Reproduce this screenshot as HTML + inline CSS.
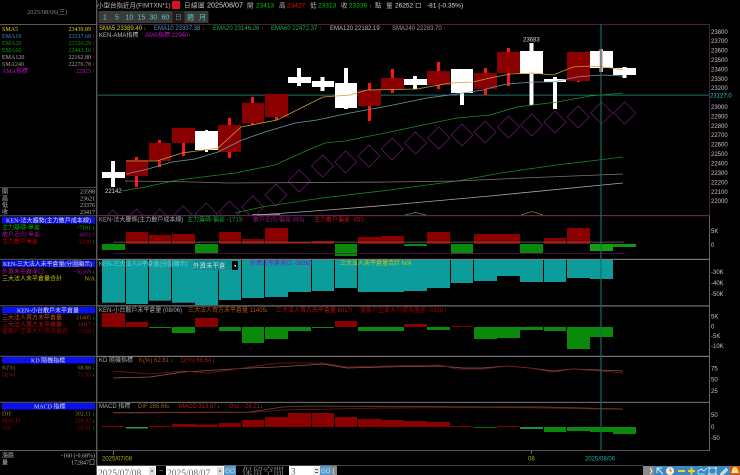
<!DOCTYPE html>
<html><head><meta charset="utf-8"><style>
html,body{margin:0;padding:0;background:#000;width:740px;height:475px;overflow:hidden}
svg{display:block;filter:blur(.3px)}
text{font-family:"Liberation Sans","Noto Sans CJK TC",sans-serif;font-size:6px;fill:#bbb}
.l text{font-family:"Liberation Serif","Noto Sans CJK TC",serif;font-size:6px}
.e{text-anchor:end}
.g{fill:#00c800}.r{fill:#e81010}
.a text{font-size:6px;fill:#c4c4c4}
</style></head><body>
<svg width="740" height="475" viewBox="0 0 740 475" xmlns="http://www.w3.org/2000/svg">
<defs><clipPath id="m"><rect x="98" y="25" width="611" height="190"/></clipPath><clipPath id="b"><rect x="0" y="460" width="740" height="15"/></clipPath></defs>
<rect width="740" height="475" fill="#000"/>

<!-- top bar -->
<text x="97" y="7.5" style="font-size:6.5px">小型台指近月(FIMTXN*1)</text>
<rect x="172" y="1" width="8" height="8" fill="#d8141c"/>
<text x="184" y="7.5" style="font-size:6.5px;letter-spacing:.5px">日線圖</text>
<text x="207" y="7.5" style="font-size:7.2px;fill:#ddd">2025/08/07</text>
<text x="247" y="7.5" style="font-size:6.5px">開</text><text x="256" y="7.5" class="g" style="font-size:6.5px">23413</text>
<text x="279" y="7.5" style="font-size:6.5px">高</text><text x="287" y="7.5" class="r" style="font-size:6.5px">23427</text>
<text x="310" y="7.5" style="font-size:6.5px">低</text><text x="318" y="7.5" class="g" style="font-size:6.5px">23313</text>
<text x="341" y="7.5" style="font-size:6.5px">收</text><text x="349" y="7.5" class="g" style="font-size:6.5px">23336</text><text x="369" y="7.5" class="g" style="font-size:6px">↓</text>
<text x="375" y="7.5" style="font-size:6.5px">點</text>
<text x="386" y="7.5" style="font-size:6.5px">量</text><text x="395" y="7.5" style="font-size:6.5px;fill:#ddd">26252</text><text x="415" y="7.5" style="font-size:6.5px">口</text>
<text x="427" y="7.5" style="font-size:6.5px;fill:#ddd">-81 (-0.35%)</text>

<!-- buttons -->
<rect x="98.5" y="11" width="110" height="12" fill="#3a3a3a"/>
<rect x="172.5" y="11" width="12" height="12" fill="#1c1c1c"/>
<g>
<text x="103" y="19.5" style="fill:#55cfc4;font-size:7px">1</text>
<text x="115" y="19.5" style="fill:#55cfc4;font-size:7px">5</text>
<text x="125.5" y="19.5" style="fill:#55cfc4;font-size:7px">10</text>
<text x="137.5" y="19.5" style="fill:#55cfc4;font-size:7px">15</text>
<text x="149.5" y="19.5" style="fill:#55cfc4;font-size:7px">30</text>
<text x="161.5" y="19.5" style="fill:#55cfc4;font-size:7px">60</text>
<text x="175" y="19.5" style="fill:#777;font-size:7px">日</text>
<text x="187" y="19.5" style="fill:#55cfc4;font-size:7px">週</text>
<text x="199" y="19.5" style="fill:#55cfc4;font-size:7px">月</text>
</g>

<!-- left column -->
<g class="l">
<text x="27" y="14" style="fill:#888;font-size:6.5px">2025/08/06(三)</text>
<text x="2" y="31" style="fill:#d8d800">SMA5</text><text x="91" y="31" class="e" style="fill:#d8d800">23439.89</text>
<text x="2" y="38" style="fill:#4488cc">EMA10</text><text x="91" y="38" class="e" style="fill:#4488cc">23337.68</text>
<text x="2" y="45" style="fill:#00a000">EMA20</text><text x="91" y="45" class="e" style="fill:#00a000">23120.29</text>
<text x="2" y="52" style="fill:#00a000">EMA60</text><text x="91" y="52" class="e" style="fill:#00a000">22443.10</text>
<text x="2" y="59" style="fill:#aaa">EMA120</text><text x="91" y="59" class="e" style="fill:#aaa">22162.80</text>
<text x="2" y="66" style="fill:#b09090">SMA240</text><text x="91" y="66" class="e" style="fill:#b09090">22276.78</text>
<text x="2" y="73" style="fill:#c010c0">AMA指標</text><text x="91" y="73" class="e" style="fill:#c010c0">22925</text>
<text x="92" y="31" class="r">↑</text><text x="92" y="38" class="r">↑</text><text x="92" y="45" class="r">↑</text><text x="92" y="52" class="r">↑</text><text x="92" y="59" class="r">↑</text><text x="92" y="66" class="r">↑</text><text x="92" y="73" class="r">↑</text>

<text x="2" y="193.5">開</text><text x="95" y="193.5" class="e">23598</text>
<text x="2" y="200.5">高</text><text x="95" y="200.5" class="e">23621</text>
<text x="2" y="207">低</text><text x="95" y="207" class="e">23376</text>
<text x="2" y="214">收</text><text x="95" y="214" class="e">23417</text>

<rect x="2" y="217" width="93" height="6.5" fill="#0a10ee"/>
<text x="6" y="222.5" textLength="85" lengthAdjust="spacing" style="fill:#ddd">KEN-法大趨勢(主力散戶成本線)</text>
<text x="2" y="229.5" style="fill:#00b000">主力基礎-單差</text><text x="91" y="229.5" class="e" style="fill:#00b000">-7181</text><text x="92" y="229.5" class="g">↓</text>
<text x="2" y="236.5" style="fill:#a01090">散戶走向-單差</text><text x="91" y="236.5" class="e" style="fill:#a01090">4851</text><text x="92" y="236.5" class="r">↑</text>
<text x="2" y="243.5" style="fill:#b00000">主力散戶單差</text><text x="91" y="243.5" class="e" style="fill:#b00000">-2330</text><text x="92" y="243.5" class="g">↓</text>

<rect x="2" y="260.5" width="93" height="6.5" fill="#0a10ee"/>
<text x="3" y="266" textLength="89" lengthAdjust="spacing" style="fill:#ddd">KEN-三大法人未平倉量(分圖顯示)</text>
<text x="2" y="273.5" style="fill:#b010a0">外資未平倉淨口</text><text x="91" y="273.5" class="e" style="fill:#b010a0">-36369</text><text x="92" y="273.5" class="g">↓</text>
<text x="2" y="280.5" style="fill:#c8c800">三大法人未平倉量合計</text><text x="95" y="280.5" class="e" style="fill:#c8c800">N/A</text>

<rect x="2" y="307" width="93" height="6.5" fill="#0a10ee"/>
<text x="17" y="312.5" textLength="62" lengthAdjust="spacing" style="fill:#ddd">KEN-小台散戶未平倉量</text>
<text x="2" y="319.5" style="fill:#c05010">三大法人買方未平倉量</text><text x="91" y="319.5" class="e" style="fill:#c05010">11405</text><text x="92" y="319.5" class="g">↓</text>
<text x="2" y="326.5" style="fill:#c01010">三大法人賣方未平倉量</text><text x="91" y="326.5" class="e" style="fill:#c01010">6017</text><text x="92" y="326.5" class="r">↑</text>
<text x="2" y="333" style="fill:#900000">盤散戶空單大戶照淘量差</text><text x="91" y="333" class="e" style="fill:#900000">-5388</text><text x="92" y="333" class="r">↑</text>

<rect x="2" y="357" width="93" height="6.5" fill="#0a10ee"/>
<text x="31" y="362.5" style="fill:#ddd">KD 隨機指標</text>
<text x="2" y="369.5" style="fill:#8a7a20">K(%)</text><text x="91" y="369.5" class="e" style="fill:#8a7a20">68.88</text><text x="92" y="369.5" class="g">↓</text>
<text x="2" y="376.5" style="fill:#a01010">D(%)</text><text x="91" y="376.5" class="e" style="fill:#a01010">71.55</text><text x="92" y="376.5" class="g">↓</text>

<rect x="2" y="403" width="93" height="6.5" fill="#0a10ee"/>
<text x="34" y="408.5" style="fill:#ddd">MACD 指標</text>
<text x="2" y="415.5" style="fill:#8a7a20">DIF</text><text x="91" y="415.5" class="e" style="fill:#8a7a20">302.11</text><text x="92" y="415.5" class="g">↓</text>
<text x="2" y="422.5" style="fill:#b00000">MACD</text><text x="91" y="422.5" class="e" style="fill:#b00000">320.92</text><text x="92" y="422.5" class="g">↓</text>
<text x="2" y="429.5" style="fill:#900000">Osc</text><text x="91" y="429.5" class="e" style="fill:#900000">-18.81</text><text x="92" y="429.5" class="g">↓</text>

<text x="2" y="457.5">漲跌</text><text x="95" y="457.5" class="e">-160 (-0.68%)</text>
<text x="2" y="464.5">量</text><text x="95" y="464.5" class="e">172847口</text>
</g>

<!-- separators -->
<g fill="#5a5a5a">
<rect x="0" y="24" width="97" height="1"/><rect x="0" y="187" width="97" height=".7"/><rect x="0" y="215.3" width="97" height="1"/>
<rect x="0" y="258.8" width="97" height="1"/><rect x="0" y="305.3" width="97" height="1"/><rect x="0" y="355.8" width="97" height="1"/><rect x="0" y="401.8" width="97" height="1"/><rect x="0" y="450" width="97" height="1"/>
<rect x="96" y="0" width="1.4" height="475"/>
<rect x="97" y="258.8" width="613" height="1.2" fill="#777"/><rect x="97" y="305.3" width="613" height="1.2" fill="#777"/><rect x="97" y="355.8" width="613" height="1.2" fill="#777"/><rect x="97" y="401.8" width="613" height="1.2" fill="#666"/><rect x="97" y="450" width="613" height="1" fill="#555"/>
<rect x="709" y="216" width="1" height="235" fill="#666"/>
<rect x="97" y="465" width="546" height="1" fill="#444"/>
</g>
<rect x="97" y="24" width="613" height="1" fill="#4a2040"/>
<rect x="97" y="215" width="613" height="1.2" fill="#5a2a50"/>
<rect x="709" y="24" width="1" height="192" fill="#4a2040"/>

<!-- diamonds -->
<g clip-path="url(#m)" fill="none" stroke="#5e1a62" stroke-width=".8">
<path d="M102 221l11-11 11 11-11 11zM125.5 220l11-11 11 11-11 11zM148.7 220l11-11 11 11-11 11zM172 217l11-11 11 11-11 11zM195.2 214l11-11 11 11-11 11zM218.5 212l11-11 11 11-11 11zM241.7 207l11-11 11 11-11 11zM265 195l11-11 11 11-11 11zM288.2 181l11-11 11 11-11 11zM311.5 166l11-11 11 11-11 11zM334.7 162l11-11 11 11-11 11zM358 156l11-11 11 11-11 11zM381.2 149l11-11 11 11-11 11zM404.5 143l11-11 11 11-11 11zM427.7 138l11-11 11 11-11 11zM451 135l11-11 11 11-11 11zM474.2 132l11-11 11 11-11 11zM497.5 127l11-11 11 11-11 11zM520.7 125l11-11 11 11-11 11zM544 122l11-11 11 11-11 11zM567.2 117l11-11 11 11-11 11zM590.5 113l11-11 11 11-11 11zM613.7 113l11-11 11 11-11 11z"/>
</g>
<path d="M405 215l10.5-2.500 10.5 2.500" fill="none" stroke="#5a8a80" stroke-width=".7"/>
<path d="M521 215l11-3.500 11 3.500" fill="none" stroke="#8a7a30" stroke-width=".7"/>
<path d="M252 214.5h28" fill="none" stroke="#a06080" stroke-width="1"/>

<!-- teal horizontal -->
<rect x="98" y="94.7" width="611" height=".8" fill="#2a8a80"/>

<!-- wicks -->
<g fill="#ff1414">
<rect x="135" y="157" width="3" height="30"/><rect x="158" y="140" width="3" height="27"/><rect x="182" y="128" width="3" height="28"/><rect x="228" y="118" width="3" height="40"/><rect x="251" y="97" width="3" height="28"/><rect x="275" y="94" width="3" height="26"/><rect x="368" y="83" width="3" height="38"/><rect x="391" y="69" width="3" height="24"/><rect x="437" y="62" width="3" height="27"/><rect x="484" y="68" width="3" height="27"/><rect x="507" y="48" width="3" height="38"/><rect x="577" y="52" width="3" height="30"/>
</g>
<g fill="#8a0000">
<rect x="126" y="160" width="22" height="16"/><rect x="149" y="143" width="22" height="18"/><rect x="172" y="128" width="23" height="15"/><rect x="218" y="125" width="23" height="27"/><rect x="242" y="103" width="22" height="20"/><rect x="265" y="94" width="23" height="23"/><rect x="358" y="90" width="23" height="16"/><rect x="381" y="78" width="23" height="11"/><rect x="427" y="71" width="23" height="14"/><rect x="474" y="73" width="23" height="16"/><rect x="497" y="52" width="23" height="21"/><rect x="567" y="52" width="23" height="29"/>
</g>
<g fill="#fff">
<rect x="111" y="161" width="4" height="26"/><rect x="102" y="172" width="23" height="6"/>
<rect x="205" y="130" width="3" height="22"/><rect x="195" y="131" width="23" height="19"/>
<rect x="297" y="68" width="4" height="18"/><rect x="288" y="77" width="23" height="6"/>
<rect x="320.5" y="77" width="4" height="14"/><rect x="312" y="81" width="22" height="6"/>
<rect x="344" y="68" width="4" height="41"/><rect x="335" y="83" width="22" height="25"/>
<rect x="413" y="76" width="4" height="13"/><rect x="404" y="79" width="23" height="6"/>
<rect x="460" y="69" width="4" height="36"/><rect x="451" y="69" width="22" height="24"/>
<rect x="529.5" y="43" width="4" height="62"/><rect x="520" y="51" width="23" height="23"/>
<rect x="553" y="77" width="4" height="32"/><rect x="544" y="79" width="22" height="3"/>
<rect x="590" y="51" width="23" height="17"/>
<rect x="622.5" y="67" width="4" height="11"/><rect x="613" y="68" width="23" height="7"/>
</g>
<rect x="599.5" y="49" width="3.5" height="23" fill="#ffb8b8"/>

<!-- MA lines -->
<g fill="none" stroke-width=".8">
<polyline stroke="#c8a030" points="126,161 157,161 182,153 218,148 241,127 277,120 323,97 350,95 367,90 417,89 450,83 473,82 490,78 510,74 533,73 553,75 573,67 590,66 612,68 623,70"/>
<polyline stroke="#6a9aaa" points="126,174 148,169 172,162 195,159 218,152 242,140 265,132 295,123 317,120 350,113 393,105 427,98 450,95 483,90 490,88 507,84 533,82 553,82 577,77 600,75 623,76"/>
<polyline stroke="#1a8a30" points="122,191 145,187 178,180 235,173 275,165 308,150 325,143 345,141 390,132 423,125 457,118 490,115 517,107 557,102 590,96 623,93"/>
<polyline stroke="#148a28" points="235,213 262,207 322,198 390,190 457,181 507,172 557,165 623,157"/>
<polyline stroke="#8a6e76" points="125,181 195,182 228,183 390,182 457,181 523,178 623,174"/>
<polyline stroke="#a8a8a8" points="257,215 328,210 390,205 490,196 623,183"/>
</g>

<!-- panel 1 -->
<g fill="#8a0000">
<rect x="126" y="232" width="22" height="12"/><rect x="149" y="235" width="22" height="9"/><rect x="172" y="234" width="23" height="10"/><rect x="219" y="232" width="22" height="12"/><rect x="242" y="239" width="22" height="5"/><rect x="265" y="228" width="23" height="16"/><rect x="288" y="242" width="23" height="2"/><rect x="312" y="241" width="22" height="3"/><rect x="358" y="237" width="23" height="7"/><rect x="381" y="236" width="23" height="8"/><rect x="427" y="232" width="23" height="12"/><rect x="474" y="234" width="23" height="10"/><rect x="497" y="234" width="23" height="10"/><rect x="544" y="238" width="22" height="6"/><rect x="567" y="228" width="23" height="16"/>
</g>
<g fill="#0a8a0a">
<rect x="102" y="244" width="23" height="6"/><rect x="195" y="244" width="23" height="9"/><rect x="335" y="244" width="22" height="12"/><rect x="404" y="244" width="23" height="2"/><rect x="451" y="244" width="22" height="10"/><rect x="520" y="244" width="23" height="9"/><rect x="590" y="244" width="23" height="7" fill="#10a010"/><rect x="613" y="244" width="23" height="3" fill="#0a9a0a"/>
</g>
<rect x="113" y="241.7" width="511" height=".8" fill="#6a6a50"/>
<rect x="113" y="253.2" width="511" height=".8" fill="#4a1a4a"/>

<!-- panel 2 -->
<g fill="#0c9c9c">
<rect x="102" y="260" width="23" height="42.7"/><rect x="126" y="260" width="22" height="44"/><rect x="149" y="260" width="22" height="40.7"/><rect x="172" y="260" width="23" height="42.7"/><rect x="195" y="260" width="23" height="45"/><rect x="219" y="260" width="22" height="40"/><rect x="242" y="260" width="22" height="38"/><rect x="265" y="260" width="23" height="37"/><rect x="288" y="260" width="23" height="32"/><rect x="312" y="260" width="22" height="31"/><rect x="335" y="260" width="22" height="28"/><rect x="358" y="260" width="23" height="32"/><rect x="381" y="260" width="23" height="32"/><rect x="404" y="260" width="23" height="31"/><rect x="427" y="260" width="23" height="28"/><rect x="451" y="260" width="22" height="23"/><rect x="474" y="260" width="23" height="21"/><rect x="497" y="260" width="23" height="16"/><rect x="520" y="260" width="23" height="22"/><rect x="544" y="260" width="22" height="22"/><rect x="567" y="260" width="23" height="18"/><rect x="590" y="260" width="23" height="19"/>
</g>
<rect x="193" y="260" width="39" height="10" fill="#0c8c8c"/>
<text x="99" y="266" style="fill:#6ad0d0">KEN-三大法人A平倉量(分圖顯示)</text>
<text x="193" y="267.5" style="fill:#cde;font-size:6.5px">外資未平倉</text>
<rect x="232" y="261" width="6" height="9" fill="#000"/><rect x="234.5" y="265" width="1.5" height="1.5" fill="#fff"/>
<text x="250" y="265" style="fill:#7a18c8">外資未平倉淨口 -36369</text><text x="309" y="265" class="g">↓</text>
<text x="340" y="265" style="fill:#c8c810">三大法人未平倉量合計 N/A</text>

<!-- panel 3 -->
<g fill="#8a0000">
<rect x="102" y="313" width="23" height="14"/><rect x="126" y="322" width="22" height="5"/><rect x="195" y="318" width="23" height="9"/><rect x="335" y="321" width="22" height="6"/><rect x="404" y="324" width="23" height="3"/><rect x="451" y="326" width="22" height="1"/>
</g>
<g fill="#0a8a0a">
<rect x="149" y="327" width="22" height="1"/><rect x="172" y="327" width="23" height="6"/><rect x="219" y="327" width="22" height="4"/><rect x="242" y="327" width="22" height="16"/><rect x="265" y="327" width="23" height="12"/><rect x="288" y="327" width="23" height="4"/><rect x="312" y="327" width="22" height="1"/><rect x="358" y="327" width="23" height="4"/><rect x="381" y="327" width="23" height="4"/><rect x="427" y="327" width="23" height="3"/><rect x="474" y="327" width="23" height="12"/><rect x="497" y="327" width="23" height="11"/><rect x="520" y="327" width="23" height="3"/><rect x="544" y="327" width="22" height="4"/><rect x="567" y="327" width="23" height="22"/><rect x="590" y="327" width="23" height="10"/>
</g>

<!-- KD -->
<g fill="none" stroke-width=".8">
<polyline stroke="#8a5a5a" points="113,378 150,377 183,372 250,368 277,367 323,364 347,368 383,367 440,366 463,368 483,368 507,366 530,368 553,371 573,369 600,370 623,371"/>
<polyline stroke="#7a1818" points="113,371 150,374 183,371 208,373 250,367 277,363 323,363 347,367 383,366 440,365 457,369 483,369 507,366 530,368 553,372 573,369 600,371 623,373"/>
</g>

<!-- MACD -->
<g fill="#8a0000">
<rect x="102" y="426" width="23" height="1"/><rect x="149" y="426" width="22" height="1"/><rect x="172" y="424" width="23" height="3"/><rect x="195" y="424.5" width="23" height="2.5"/><rect x="219" y="423" width="22" height="4"/><rect x="242" y="420" width="22" height="7"/><rect x="265" y="417" width="23" height="10"/><rect x="288" y="413" width="23" height="14"/><rect x="312" y="413" width="22" height="14"/><rect x="335" y="417" width="22" height="10"/><rect x="358" y="419" width="23" height="8"/><rect x="381" y="420" width="23" height="7"/><rect x="404" y="421" width="23" height="6"/><rect x="427" y="422" width="23" height="5"/><rect x="451" y="426" width="22" height="1"/><rect x="497" y="426" width="23" height="1"/>
</g>
<g fill="#0a8a0a">
<rect x="126" y="427" width="22" height="1.5" fill="#20a040"/><rect x="474" y="427" width="23" height=".8"/><rect x="520" y="427" width="23" height="2" fill="#209040"/><rect x="544" y="427" width="22" height="5"/><rect x="567" y="427" width="23" height="4"/><rect x="590" y="427" width="23" height="5"/><rect x="613" y="427" width="23" height="7"/>
</g>
<g fill="none" stroke-width=".8">
<polyline stroke="#6a4a40" points="113,412.500 250,412 263,410 283,407 307,406 490,407 543,407 623,409"/>
<polyline stroke="#7a1818" points="113,413 250,412.500 283,410 383,408 490,407.500 543,408 623,409.500"/>
</g>

<!-- vertical cursor -->
<rect x="600.3" y="24" width="1.3" height="427" fill="#0e6e6a" opacity=".9"/>

<!-- legends -->
<text x="99" y="30" style="fill:#d8d820">SMA5 23389.40</text><text x="143" y="30" class="g">↓</text>
<text x="154" y="30" style="fill:#4a9ad0">EMA10 23337.38</text><text x="202" y="30" class="g">↓</text>
<text x="213" y="30" style="fill:#10b040">EMA20 23146.26</text><text x="261" y="30" class="r">↑</text>
<text x="271" y="30" style="fill:#10b040">EMA60 22472.37</text><text x="319" y="30" class="r">↑</text>
<text x="330" y="30" style="fill:#bbb">EMA120 22182.19</text><text x="381" y="30" class="r">↑</text>
<text x="392" y="30" style="fill:#b09090">SMA240 22283.70</text><text x="443" y="30" class="r">↑</text>
<text x="99" y="37" style="fill:#bbb">KEN-AMA指標</text>
<text x="145" y="37" style="fill:#c010c0">AMA指標 22940</text><text x="188" y="37" class="r">↑</text>

<text x="99" y="221.5" style="fill:#aaa">KEN-法大腰條(主力散戶成本線)</text>
<text x="187" y="221.5" style="fill:#10a030">主力籌碼-偏差 -1713</text><text x="241" y="221.5" class="r">↑</text>
<text x="253" y="221.5" style="fill:#90107a">散戶走向-偏差 866</text><text x="302" y="221.5" class="g">↓</text>
<text x="314" y="221.5" style="fill:#c01010">主力散戶偏差 -853</text><text x="364" y="221.5" class="r">↑</text>

<text x="99" y="312" style="fill:#aaa">KEN-小台散戶未平倉量 (08/06)</text>
<text x="188" y="312" style="fill:#c05010">三大法人買方未平倉量 11405</text><text x="265" y="312" class="g">↓</text>
<text x="276" y="312" style="fill:#c01010">三大法人賣方未平倉量 6017</text><text x="350" y="312" class="r">↑</text>
<text x="360" y="312" style="fill:#a00000">盤散戶空單大戶照淘量差 -5388</text><text x="444" y="312" class="r">↑</text>

<text x="99" y="362" style="fill:#aaa">KD 隨機指標</text>
<text x="139" y="362" style="fill:#a05020">K(%) 62.81</text><text x="170" y="362" class="g">↓</text>
<text x="181" y="362" style="fill:#b01010">D(%) 66.64</text><text x="212" y="362" class="g">↓</text>

<text x="99" y="408" style="fill:#aaa">MACD 指標</text>
<text x="138" y="408" style="fill:#a06020">DIF 285.66</text><text x="167" y="408" class="g">↓</text>
<text x="179" y="408" style="fill:#c01010">MACD 313.87</text><text x="217" y="408" class="g">↓</text>
<text x="229" y="408" style="fill:#b01010">Osc. -28.21</text><text x="260" y="408" class="g">↓</text>

<text x="105" y="193" style="fill:#ddd">22142</text>
<text x="523" y="41.5" style="fill:#ddd">23683</text>

<!-- axis -->
<g class="a">
<text x="711" y="34">23800</text><text x="711" y="43">23700</text><text x="711" y="52.5">23600</text><text x="711" y="62">23500</text><text x="711" y="71.5">23400</text><text x="711" y="81">23300</text><text x="711" y="90">23200</text>
<text x="710" y="97.5" style="fill:#30c8c8">23127.0</text>
<text x="711" y="109">23000</text><text x="711" y="118.5">22900</text><text x="711" y="128">22800</text><text x="711" y="137">22700</text><text x="711" y="146.5">22600</text><text x="711" y="156">22500</text><text x="711" y="165.5">22400</text><text x="711" y="175">22300</text><text x="711" y="184.5">22200</text><text x="711" y="194">22100</text><text x="711" y="203">22000</text>
<text x="711" y="233">5K</text><text x="711" y="247">0</text>
<text x="711" y="274">-30K</text><text x="711" y="285">-40K</text><text x="711" y="296">-50K</text>
<text x="711" y="318.5">5K</text><text x="711" y="328.5">0</text><text x="711" y="338">-5K</text><text x="711" y="348">-10K</text>
<text x="711" y="370.5">75</text><text x="711" y="381.5">50</text><text x="711" y="393">25</text>
<text x="711" y="417">50</text><text x="711" y="429">0</text><text x="711" y="440">-50</text>
</g>
<rect x="113" y="451" width=".7" height="4" fill="#999"/><rect x="531" y="451" width=".7" height="3" fill="#999"/>
<text x="102" y="460.5" style="fill:#b0b010">2025/07/08</text>
<text x="528" y="460.5" style="fill:#b0b010">08</text>
<text x="585" y="460.5" style="fill:#20b0b0">2025/08/06</text>

<!-- bottom controls -->
<g clip-path="url(#b)">
<rect x="97" y="466" width="59" height="10" fill="#fff"/>
<text x="98" y="476" style="font-family:'Liberation Serif',serif;font-size:9.5px;fill:#666">2025/07/08</text>
<rect x="149" y="467" width="6" height="8" fill="#ddd"/><rect x="151" y="470.5" width="2" height="1" fill="#333"/>
<text x="159" y="473" style="fill:#aaa;font-size:7px">~</text>
<rect x="166" y="466" width="58" height="10" fill="#fff"/>
<text x="167" y="476" style="font-family:'Liberation Serif',serif;font-size:9.5px;fill:#666">2025/08/07</text>
<rect x="217" y="467" width="6" height="8" fill="#ddd"/><rect x="219" y="470.5" width="2" height="1" fill="#333"/>
<rect x="224" y="465.5" width="12" height="10" fill="#5a9ac8"/>
<text x="225" y="473" style="fill:#cde;font-size:6.5px">GO</text>
<text x="242" y="475" style="font-family:'Noto Serif CJK SC','Liberation Serif',serif;font-size:10.5px;fill:#888">保留空間</text>
<rect x="289" y="466" width="31" height="10" fill="#fff"/>
<text x="291" y="474.5" style="font-family:'Liberation Serif',serif;font-size:9px;fill:#555">3</text>
<rect x="313" y="467" width="7" height="8" fill="#eee"/><rect x="315" y="469" width="3" height="1" fill="#555"/><rect x="315" y="472" width="3" height="1" fill="#555"/>
<rect x="320" y="465.5" width="11" height="10" fill="#5a9ac8"/>
<text x="321" y="473" style="fill:#cde;font-size:6px">GO</text>
<rect x="331" y="465.5" width="6" height="10" fill="#888"/>
<text x="332.5" y="473" style="fill:#fff;font-size:6px">(</text>

<!-- toolbar -->
<rect x="643" y="466" width="11" height="10" fill="#8a8a8a"/>
<path d="M650 468l2 3-2 3" stroke="#fff" fill="none" stroke-width=".9"/>
<rect x="654" y="466" width="86" height="10" fill="#3c86c4"/>
<path d="M657 468h5M657 468v5M657 468l6 6" stroke="#cfe" fill="none" stroke-width="1"/>
<circle cx="670" cy="471" r="4" fill="#fdeee0"/><path d="M670 468v3h2" stroke="#e06a20" fill="none" stroke-width="1"/>
<rect x="678" y="470" width="7" height="2" fill="#f0d020"/>
<rect x="688" y="470" width="7" height="2" fill="#f0d020"/><rect x="690.5" y="467.5" width="2" height="7" fill="#f0d020"/>
<path d="M698 474h7M698 474v-3l3-2 3 2 3-3" stroke="#cfe" fill="none" stroke-width=".8"/>
<rect x="709" y="468" width="7" height="6" fill="none" stroke="#cfe" stroke-width=".8"/><path d="M708 467l2 2M717 467l-2 2M708 475l2-2M717 475l-2-2" stroke="#fff" stroke-width=".6"/>
<path d="M720 474l6-6 2 2-6 6z" fill="#bde" stroke="#fff" stroke-width=".4"/>
<rect x="730" y="466" width="10" height="10" fill="#d05a10"/>
<path d="M735 467c-2 0-3 2-3 4l-1 2h8l-1-2c0-2-1-4-3-4z" fill="#ffe090"/>
</g>
</svg>
</body></html>
